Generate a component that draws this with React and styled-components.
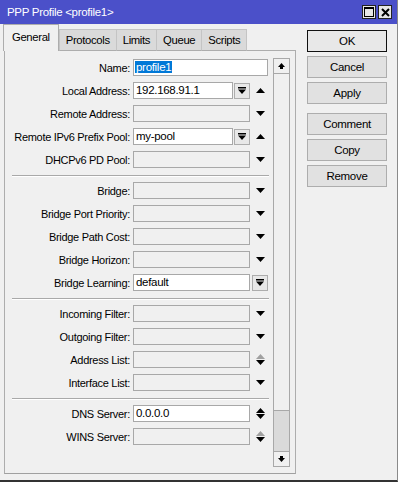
import styled, { createGlobalStyle } from "styled-components";

const Global = createGlobalStyle`
  html, body { margin: 0; padding: 0; background: #f0f0f0; }
  body { font-family: "Liberation Sans", Arial, sans-serif; font-size: 11px; }
  * { box-sizing: border-box; }
`;

const Window = styled.div`
  width: 398px;
  height: 482px;
  background: #f0f0f0;
  border-right: 1px solid #8a8a8a;
  border-bottom: 2px solid #333;
  display: flex;
  flex-direction: column;
  overflow: hidden;
`;

const TitleBar = styled.div`
  height: 24px;
  background: #4b50c9;
  display: flex;
  align-items: center;
  padding: 0 5px 0 7px;
  flex-shrink: 0;
`;

const Title = styled.div`
  flex: 1;
  color: #fff;
  font-size: 11.5px;
  letter-spacing: -0.3px;
`;

const TitleButtons = styled.div`
  display: flex;
  gap: 2px;
`;

const TitleBtn = styled.div`
  width: 14px;
  height: 14px;
  background: #e6e6e6;
  border: 1px solid #222;
  display: flex;
  align-items: center;
  justify-content: center;
`;

const Body = styled.div`
  flex: 1;
  display: flex;
  padding: 1px 0 0 4px;
`;

const TabArea = styled.div`
  width: 292px;
  display: flex;
  flex-direction: column;
`;

const TabStrip = styled.div`
  height: 26px;
  display: flex;
  align-items: flex-end;
  margin-left: -1px;
  position: relative;
  z-index: 1;
  margin-bottom: -1px;
`;

const Tab = styled.div`
  height: ${(p) => (p.$active ? "27px" : "22px")};
  padding: 0 ${(p) => (p.$active ? "8px" : "6px")} ${(p) => (p.$active ? "3px" : "0")};
  background: ${(p) => (p.$active ? "#f0f0f0" : "#dadada")};
  border: 1px solid ${(p) => (p.$active ? "#adadad" : "#c4c4c4")};
  border-bottom: ${(p) => (p.$active ? "none" : "1px solid #adadad")};
  margin-right: ${(p) => (p.$active ? "0" : "-1px")};
  display: flex;
  align-items: center;
  font-size: 11.3px;
  letter-spacing: -0.35px;
  color: #000;
`;

const Panel = styled.div`
  flex: 1;
  border: 1px solid #adadad;
  border-bottom-color: #a0a0a0;
  margin-bottom: 6px;
  display: flex;
  padding: 0 5px 0 0;
`;

const Form = styled.div`
  flex: 1;
  padding: 8px 0 0 0;
  display: flex;
  flex-direction: column;
`;

const Section = styled.div`
  display: flex;
  flex-direction: column;
  gap: 6px;
`;

const Separator = styled.div`
  margin: 7px 4px 5px 7px;
  border-top: 1px solid #a9a9a9;
  border-bottom: 1px solid #fff;
`;

const Row = styled.div`
  display: flex;
  height: 17px;
  align-items: center;
`;

const Label = styled.div`
  width: 125px;
  text-align: right;
  margin-right: 3px;
  white-space: nowrap;
  letter-spacing: -0.3px;
  color: #000;
`;

const Field = styled.div`
  width: 135px;
  display: flex;
  align-items: center;
  height: 17px;
`;

const Input = styled.div`
  width: ${(p) => p.$w}px;
  height: 17px;
  border: 1px solid #a8a8a8;
  background: ${(p) => (p.$off ? "#f0f0f0" : "#fff")};
  padding: 0 2px;
  line-height: 15px;
  font-size: 11.5px;
  letter-spacing: -0.3px;
  color: #000;
  white-space: nowrap;
  overflow: hidden;
`;

const Selected = styled.span`
  background: #0078d7;
  color: #fff;
  margin-left: -1px;
  padding: 0 1px;
`;

const DropBtn = styled.div`
  width: 16px;
  height: 16px;
  margin-left: ${(p) => p.$gap}px;
  border: 1px solid #adadad;
  background: #e8e8e8;
  display: flex;
  align-items: center;
  justify-content: center;
`;

const IconSlot = styled.div`
  width: 16px;
  margin-left: 2px;
  display: flex;
  align-items: center;
  justify-content: center;
`;

const ScrollBar = styled.div`
  width: 17px;
  margin: 7px 0 6px;
  border: 1px solid #a8a8a8;
  background: #dadada;
  display: flex;
  flex-direction: column;
`;

const ScrollBtn = styled.div`
  height: 15px;
  background: #f0f0f0;
  border-bottom: ${(p) => (p.$top ? "1px solid #a8a8a8" : "none")};
  border-top: ${(p) => (p.$top ? "none" : "1px solid #a8a8a8")};
  display: flex;
  align-items: center;
  justify-content: center;
`;

const Thumb = styled.div`
  height: 337px;
  background: #f0f0f0;
  border-bottom: 1px solid #a8a8a8;
`;

const Track = styled.div`
  flex: 1;
`;

const ButtonColumn = styled.div`
  margin-left: 11px;
  width: 80px;
  padding-top: 5px;
  display: flex;
  flex-direction: column;
  gap: 4px;
`;

const Button = styled.div`
  height: 22px;
  border: 1px solid ${(p) => (p.$default ? "#111" : "#adadad")};
  background: ${(p) => (p.$default ? "#e8e8e8" : "#e1e1e1")};
  display: flex;
  align-items: center;
  justify-content: center;
  font-size: 11.5px;
  letter-spacing: -0.3px;
  color: #000;
  margin-top: ${(p) => (p.$space ? "5px" : "0")};
`;

const Down = ({ c = "#000" }) => (
  <svg width="9" height="5" viewBox="0 0 9 5">
    <polygon points="0,0 9,0 4.5,5" fill={c} />
  </svg>
);

const Up = ({ c = "#000" }) => (
  <svg width="9" height="5" viewBox="0 0 9 5">
    <polygon points="0,5 9,5 4.5,0" fill={c} />
  </svg>
);

const UpDown = ({ up = "#000" }) => (
  <svg width="9" height="11" viewBox="0 0 9 11">
    <polygon points="0,5 9,5 4.5,0" fill={up} />
    <polygon points="0,6 9,6 4.5,11" fill="#000" />
  </svg>
);

const DropIcon = () => (
  <svg width="8" height="7" viewBox="0 0 8 7">
    <rect x="0" y="0" width="8" height="1.5" fill="#000" />
    <polygon points="0,2.5 8,2.5 4,7" fill="#000" />
  </svg>
);

const ScrollArrow = ({ down }) => (
  <svg width="7" height="6" viewBox="0 0 7 6" style={{ transform: down ? "rotate(180deg)" : "none" }}>
    <polygon points="0,4 7,4 3.5,0" fill="#000" />
    <rect x="2" y="4" width="3" height="2" fill="#000" />
  </svg>
);

const icons = {
  down: <Down />,
  up: <Up />,
  updown: <UpDown />,
  updownOff: <UpDown up="#a0a0a0" />,
};

// kind: "name" | "combo" | "empty" | "select" | "text"
const sections = [
  [
    { label: "Name", kind: "name", value: "profile1" },
    { label: "Local Address", kind: "combo", value: "192.168.91.1", icon: "up" },
    { label: "Remote Address", kind: "empty", icon: "down" },
    { label: "Remote IPv6 Prefix Pool", kind: "combo", value: "my-pool", icon: "up" },
    { label: "DHCPv6 PD Pool", kind: "empty", icon: "down" },
  ],
  [
    { label: "Bridge", kind: "empty", icon: "down" },
    { label: "Bridge Port Priority", kind: "empty", icon: "down" },
    { label: "Bridge Path Cost", kind: "empty", icon: "down" },
    { label: "Bridge Horizon", kind: "empty", icon: "down" },
    { label: "Bridge Learning", kind: "select", value: "default" },
  ],
  [
    { label: "Incoming Filter", kind: "empty", icon: "down" },
    { label: "Outgoing Filter", kind: "empty", icon: "down" },
    { label: "Address List", kind: "empty", icon: "updownOff" },
    { label: "Interface List", kind: "empty", icon: "down" },
  ],
  [
    { label: "DNS Server", kind: "text", value: "0.0.0.0", icon: "updown" },
    { label: "WINS Server", kind: "empty", icon: "updownOff" },
  ],
];

const renderField = (r) => {
  switch (r.kind) {
    case "name":
      return (
        <Input $w={135}>
          <Selected>{r.value}</Selected>
        </Input>
      );
    case "combo":
      return (
        <>
          <Input $w={100}>{r.value}</Input>
          <DropBtn $gap={1}>
            <DropIcon />
          </DropBtn>
          <IconSlot>{icons[r.icon]}</IconSlot>
        </>
      );
    case "select":
      return (
        <>
          <Input $w={117}>{r.value}</Input>
          <DropBtn $gap={2}>
            <DropIcon />
          </DropBtn>
        </>
      );
    case "text":
      return (
        <>
          <Input $w={117}>{r.value}</Input>
          <IconSlot>{icons[r.icon]}</IconSlot>
        </>
      );
    default:
      return (
        <>
          <Input $w={117} $off />
          <IconSlot>{icons[r.icon]}</IconSlot>
        </>
      );
  }
};

const tabs = ["General", "Protocols", "Limits", "Queue", "Scripts"];
const buttons = ["OK", "Cancel", "Apply", "Comment", "Copy", "Remove"];

export default function App() {
  return (
    <>
      <Global />
      <Window>
        <TitleBar>
          <Title>PPP Profile &lt;profile1&gt;</Title>
          <TitleButtons>
            <TitleBtn>
              <svg width="10" height="10" viewBox="0 0 10 10">
                <rect x="0.5" y="0.5" width="9" height="9" fill="none" stroke="#000" />
                <rect x="0" y="0" width="10" height="2" fill="#000" />
              </svg>
            </TitleBtn>
            <TitleBtn>
              <svg width="9" height="9" viewBox="0 0 9 9">
                <path d="M1 1 L8 8 M8 1 L1 8" stroke="#000" strokeWidth="2" />
              </svg>
            </TitleBtn>
          </TitleButtons>
        </TitleBar>
        <Body>
          <TabArea>
            <TabStrip>
              {tabs.map((t, i) => (
                <Tab key={t} $active={i === 0}>
                  {t}
                </Tab>
              ))}
            </TabStrip>
            <Panel>
              <Form>
                {sections.map((s, i) => (
                  <div key={i}>
                    {i > 0 && <Separator />}
                    <Section>
                      {s.map((r) => (
                        <Row key={r.label}>
                          <Label>{r.label}:</Label>
                          <Field>{renderField(r)}</Field>
                        </Row>
                      ))}
                    </Section>
                  </div>
                ))}
              </Form>
              <ScrollBar>
                <ScrollBtn $top>
                  <ScrollArrow />
                </ScrollBtn>
                <Thumb />
                <Track />
                <ScrollBtn>
                  <ScrollArrow down />
                </ScrollBtn>
              </ScrollBar>
            </Panel>
          </TabArea>
          <ButtonColumn>
            {buttons.map((b, i) => (
              <Button key={b} $default={i === 0} $space={b === "Comment"}>
                {b}
              </Button>
            ))}
          </ButtonColumn>
        </Body>
      </Window>
    </>
  );
}
